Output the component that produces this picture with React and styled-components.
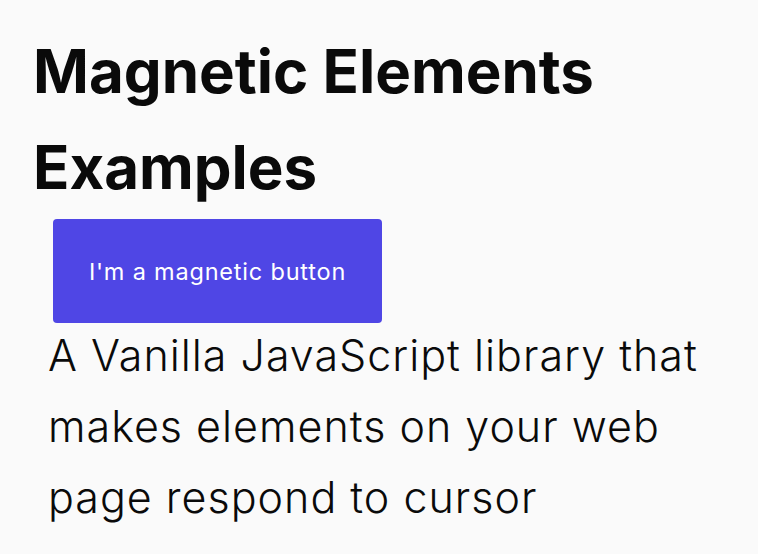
import styled, { createGlobalStyle } from "styled-components";

const GlobalStyle = createGlobalStyle`
  html, body {
    margin: 0;
    background: #fafafa;
  }
  body {
    font-family: Inter, "Noto Sans", sans-serif;
    color: #0a0a0a;
  }
`;

const Page = styled.main`
  padding: 23px 0 0 33px;
  width: 700px;
`;

const Title = styled.h1`
  margin: 0;
  font-size: 60px;
  font-weight: 700;
  line-height: 96px;
  letter-spacing: 0;
`;

const MagneticButton = styled.button`
  display: block;
  margin: 4px 0 0 20px;
  width: 329px;
  height: 104px;
  border: none;
  border-radius: 4px;
  background: #4f46e5;
  color: #ffffff;
  font-family: Inter, sans-serif;
  font-size: 23.5px;
  font-weight: 400;
  letter-spacing: 0.8px;
  cursor: pointer;
`;

const Lead = styled.p`
  margin: -3px 0 0 15px;
  font-size: 43px;
  font-weight: 300;
  line-height: 71px;
  letter-spacing: 1px;
`;

export default function App() {
  return (
    <>
      <GlobalStyle />
      <Page>
        <Title>Magnetic Elements Examples</Title>
        <MagneticButton>I'm a magnetic button</MagneticButton>
        <Lead>
          A Vanilla JavaScript library that makes elements on your web page respond to cursor
        </Lead>
      </Page>
    </>
  );
}
